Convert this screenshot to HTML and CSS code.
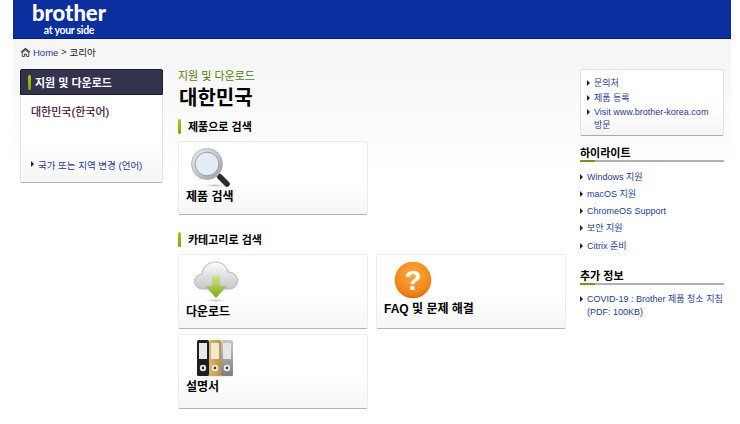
FILE: index.html
```html
<!DOCTYPE html>
<html lang="ko">
<head>
    <meta charset="UTF-8">
    <meta name="viewport" content="width=device-width, initial-scale=1.0">
    <title>대한민국</title>
    <link rel="stylesheet" href="styles.css">
</head>
<body>
  <div id="page">
    <div id="header">
      <a class="logo" href="#">
        <span class="logo-name">brother</span>
        <span class="logo-tag">at your side</span>
      </a>
    </div>

    <div id="content">
      <div class="crumbs">
        <svg class="home" width="11" height="10" viewBox="0 0 11 10">
          <path d="M0.5 5 L5.5 0.8 L10.5 5 L9.5 5.6 L5.5 2.4 L1.5 5.6 Z" fill="#333"/>
          <path d="M2.2 5.8 L5.5 3.2 L8.8 5.8 V9.4 H6.4 V7 H4.6 V9.4 H2.2 Z" fill="none" stroke="#444" stroke-width="1"/>
        </svg>
        <a href="#">Home</a> <span class="sep">&gt;</span> <span>코리아</span>
      </div>

      <div class="columns">
        <div id="left">
          <div class="side-title"><span class="bar"></span>지원 및 다운로드</div>
          <div class="side-body">
            <div class="side-current">대한민국(한국어)</div>
            <a class="arrow side-change" href="#">국가 또는 지역 변경 (언어)</a>
          </div>
        </div>

        <div id="main">
          <div class="eyebrow">지원 및 다운로드</div>
          <h1>대한민국</h1>

          <h2><span class="bar"></span>제품으로 검색</h2>
          <div class="cards">
            <a class="card card-search" href="#">
              <svg width="42" height="42" viewBox="0 0 42 42">
                <defs>
                  <linearGradient id="ring" x1="0" y1="0" x2="1" y2="1">
                    <stop offset="0" stop-color="#f0f0f0"/>
                    <stop offset="1" stop-color="#9c9c9c"/>
                  </linearGradient>
                  <radialGradient id="shade">
                    <stop offset="0" stop-color="#bbb"/>
                    <stop offset="1" stop-color="#fff" stop-opacity="0"/>
                  </radialGradient>
                </defs>
                <ellipse cx="25" cy="38.5" rx="15" ry="2.5" fill="url(#shade)"/>
                <path d="M27 27 L36.5 36.5" stroke="#aaa" stroke-width="5"/>
                <path d="M30 30 L37 37" stroke="#2c2c2c" stroke-width="5.5" stroke-linecap="round"/>
                <circle cx="17" cy="17" r="15.5" fill="url(#ring)" stroke="#aaa" stroke-width="0.8"/>
                <circle cx="17" cy="17" r="11.8" fill="#e3edf5" stroke="#9aa2a8" stroke-width="1"/>
              </svg>
              <span class="card-label">제품 검색</span>
            </a>
          </div>

          <h2 class="h2-second"><span class="bar"></span>카테고리로 검색</h2>
          <div class="cards">
            <a class="card card-down" href="#">
              <svg width="44" height="42" viewBox="0 0 44 42">
                <defs>
                  <linearGradient id="cloud" x1="0" y1="0" x2="0" y2="1">
                    <stop offset="0" stop-color="#fdfdfd"/>
                    <stop offset="1" stop-color="#c4c6c4"/>
                  </linearGradient>
                  <linearGradient id="green" x1="0" y1="0" x2="0" y2="1">
                    <stop offset="0" stop-color="#d2e48c"/>
                    <stop offset="1" stop-color="#7fa716"/>
                  </linearGradient>
                </defs>
                <ellipse cx="22" cy="39.5" rx="15" ry="1.8" fill="url(#shade)"/>
                <path d="M9 28 C3 28 0.5 24 0.5 20.5 C0.5 16 4 13.5 7.5 13.5 C8.5 7 14 1 21.5 1 C28 1 33 5.5 34 11 C39.5 11 43.5 15 43.5 20 C43.5 24.5 40 28 35 28 Z" fill="url(#cloud)" stroke="#b4b6b4" stroke-width="1"/>
                <path d="M18 15 H26 V25 H33 L22 37 L11 25 H18 Z" fill="url(#green)"/>
              </svg>
              <span class="card-label">다운로드</span>
            </a>
            <a class="card card-faq" href="#">
              <svg width="38" height="38" viewBox="0 0 38 38">
                <defs>
                  <radialGradient id="orange" cx="0.5" cy="0.35" r="0.7">
                    <stop offset="0" stop-color="#fdaa3c"/>
                    <stop offset="0.7" stop-color="#f5871c"/>
                    <stop offset="1" stop-color="#d9640a"/>
                  </radialGradient>
                </defs>
                <circle cx="19" cy="19" r="18.3" fill="url(#orange)"/>
                <text class="faq-mark" x="19" y="29" text-anchor="middle">?</text>
              </svg>
              <span class="card-label">FAQ 및 문제 해결</span>
            </a>
            <a class="card card-manual" href="#">
              <svg width="58" height="38" viewBox="0 0 58 38">
                <defs>
                  <linearGradient id="gold" x1="0" y1="0" x2="1" y2="0">
                    <stop offset="0" stop-color="#d9b768"/>
                    <stop offset="1" stop-color="#bb9442"/>
                  </linearGradient>
                  <linearGradient id="silver" x1="0" y1="0" x2="0" y2="1">
                    <stop offset="0" stop-color="#c8c8c8"/>
                    <stop offset="1" stop-color="#7e7e7e"/>
                  </linearGradient>
                  <radialGradient id="floor">
                    <stop offset="0" stop-color="#aaa"/>
                    <stop offset="1" stop-color="#fff" stop-opacity="0"/>
                  </radialGradient>
                </defs>
                <ellipse cx="29" cy="35.5" rx="29" ry="2" fill="url(#floor)"/>
                <rect x="10" y="0" width="12" height="36" rx="1.5" fill="#1e1e1e"/>
                <rect x="12" y="3" width="8" height="16" fill="#e8e8e8"/>
                <circle cx="16" cy="28" r="3.2" fill="#eee"/><circle cx="16" cy="28" r="1.4" fill="#333"/>
                <rect x="22" y="0" width="12" height="36" rx="1.5" fill="url(#gold)"/>
                <rect x="24" y="3" width="8" height="16" fill="#efe8d4"/>
                <circle cx="28" cy="28" r="3.2" fill="#eee"/><circle cx="28" cy="28" r="1.4" fill="#444"/>
                <rect x="34" y="0" width="12" height="36" rx="1.5" fill="url(#silver)"/>
                <rect x="36" y="3" width="8" height="16" fill="#e6e6e6"/>
                <circle cx="40" cy="28" r="3.2" fill="#eee"/><circle cx="40" cy="28" r="1.4" fill="#444"/>
              </svg>
              <span class="card-label">설명서</span>
            </a>
          </div>
        </div>

        <div id="right">
          <div class="quick">
            <a class="arrow" href="#">문의처</a>
            <a class="arrow" href="#">제품 등록</a>
            <a class="arrow" href="#">Visit www.brother-korea.com 방문</a>
          </div>

          <h3>하이라이트</h3>
          <div class="links">
            <a class="arrow" href="#">Windows 지원</a>
            <a class="arrow" href="#">macOS 지원</a>
            <a class="arrow" href="#">ChromeOS Support</a>
            <a class="arrow" href="#">보안 지원</a>
            <a class="arrow" href="#">Citrix 준비</a>
          </div>

          <h3 class="h3-second">추가 정보</h3>
          <div class="links">
            <a class="arrow" href="#">COVID-19 : Brother 제품 청소 지침 (PDF: 100KB)</a>
          </div>
        </div>
      </div>
    </div>
  </div>
</body>
</html>
```

FILE: styles.css
```css
body {
  margin: 0;
  padding: 0;
  background-color: #fff;
  color: #000;
  font-family: "Liberation Sans", "Noto Sans CJK KR", sans-serif;
  font-size: 9px;
}

a {
  color: #1c3b9c;
  text-decoration: none;
}

#page {
  width: 718px;
  height: 424px;
  margin-left: 13px;
  overflow: hidden;
}

#header {
  height: 39px;
  box-sizing: border-box;
  background-color: #0c2f9f;
  border-bottom: 1px solid #0a1f78;
  padding-left: 18px;
}

.logo {
  display: flex;
  flex-direction: column;
  align-items: center;
  width: 76px;
  color: #fff;
}

.logo-name {
  font-family: Lato, sans-serif;
  font-size: 22px;
  font-weight: 900;
  line-height: 24px;
  letter-spacing: 0;
  margin-top: 1px;
}

.logo-tag {
  font-family: Lato, sans-serif;
  font-size: 10.5px;
  font-weight: 700;
  line-height: 10px;
  letter-spacing: -0.3px;
}

#content {
  height: 385px;
  padding: 0 7px;
  background: linear-gradient(#f5f5f5, #fff 135px);
}

.crumbs {
  display: flex;
  align-items: center;
  gap: 2px;
  height: 26px;
  margin-bottom: 4px;
  color: #222;
  font-size: 9.5px;
}

.crumbs .sep {
  font-size: 9px;
  margin: 0 1px;
}

.columns {
  display: flex;
}

.bar {
  display: block;
  width: 3px;
  height: 15px;
  border-radius: 2px;
  background: linear-gradient(#a8cc10, #7da300);
}

#left {
  width: 143px;
  height: 114px;
  flex-shrink: 0;
  box-sizing: border-box;
  background: linear-gradient(#fff 60%, #f6f6f6);
  border: 1px solid #e4e4e4;
  border-bottom: 1px solid #b4b4b4;
  border-radius: 2px;
}

.side-title {
  display: flex;
  align-items: center;
  gap: 4px;
  height: 26px;
  margin: -1px -1px 0;
  padding-left: 7px;
  background-color: #33334d;
  border: 1px solid #1d1d2c;
  box-sizing: border-box;
  border-radius: 2px 2px 0 0;
  color: #fff;
  font-size: 11px;
  font-weight: bold;
}

.side-body {
  padding: 10px 10px 0;
}

.side-current {
  color: #3f0833;
  font-size: 11px;
  line-height: 14px;
  -webkit-text-stroke: 0.2px #3f0833;
}

.side-change {
  margin-top: 39px;
  font-size: 9.5px;
}

.arrow {
  display: block;
  position: relative;
  padding-left: 7px;
}

.arrow::before {
  content: "";
  position: absolute;
  left: 0;
  top: 3px;
  border-left: 3px solid #222;
  border-top: 3px solid transparent;
  border-bottom: 3px solid transparent;
}

#main {
  width: 388px;
  margin-left: 15px;
  flex-shrink: 0;
}

.eyebrow {
  color: #4d8000;
  font-size: 11px;
  line-height: 14px;
}

h1 {
  margin: 2px 0 0 1px;
  font-size: 20px;
  line-height: 26px;
  font-weight: bold;
}

h2 {
  display: flex;
  align-items: center;
  gap: 7px;
  margin: 7px 0;
  height: 16px;
  font-size: 11px;
  font-weight: bold;
}

.h2-second {
  margin-top: 16px;
}

.cards {
  display: grid;
  grid-template-columns: 190px 190px;
  gap: 5px 8px;
}

.card {
  display: flex;
  flex-direction: column;
  box-sizing: border-box;
  height: 75px;
  padding: 6px 0 0 7px;
  background: linear-gradient(#fff 55%, #f6f6f6);
  border: 1px solid #ececec;
  border-bottom: 1px solid #b2b2b2;
  border-radius: 2px;
  color: #000;
}

.card svg {
  display: block;
}

.card-label {
  font-size: 12px;
  font-weight: bold;
  line-height: 18px;
}

.card-search {
  height: 74px;
  padding-top: 5px;
}

.card-search svg {
  margin-left: 4px;
}

.card-search .card-label {
  margin-top: -1px;
}

.card-down svg {
  margin-left: 8px;
}

.card-faq svg {
  margin-left: 10px;
}

.card-faq .card-label {
  margin-top: 1px;
}

.faq-mark {
  font-family: "Liberation Sans", sans-serif;
  font-size: 28px;
  font-weight: bold;
  fill: #fff;
}

.card-manual {
  padding-top: 5px;
}

.card-manual svg {
  margin-left: 1px;
}

#right {
  width: 144px;
  margin-left: 14px;
  flex-shrink: 0;
}

.quick {
  box-sizing: border-box;
  height: 67px;
  padding: 7px 6px 0;
  background: linear-gradient(#fff 60%, #f4f4f4);
  border: 1px solid #e2e2e2;
  border-bottom: 1px solid #aaa;
  border-radius: 2px;
  line-height: 13px;
}

.quick .arrow {
  margin-bottom: 1.5px;
}

h3 {
  margin: 11px 0 0;
  padding-bottom: 1px;
  height: 12px;
  font-size: 11px;
  font-weight: bold;
  line-height: 12px;
  border-bottom: 2px solid #b0b0b0;
  position: relative;
}

h3::after {
  content: "";
  position: absolute;
  left: 0;
  bottom: -2px;
  width: 15px;
  height: 2px;
  background-color: #6f9c08;
}

.h3-second {
  margin-top: 17px;
}

.links {
  padding-top: 8.5px;
  line-height: 13px;
}

.links .arrow {
  margin-bottom: 4.3px;
}
```
